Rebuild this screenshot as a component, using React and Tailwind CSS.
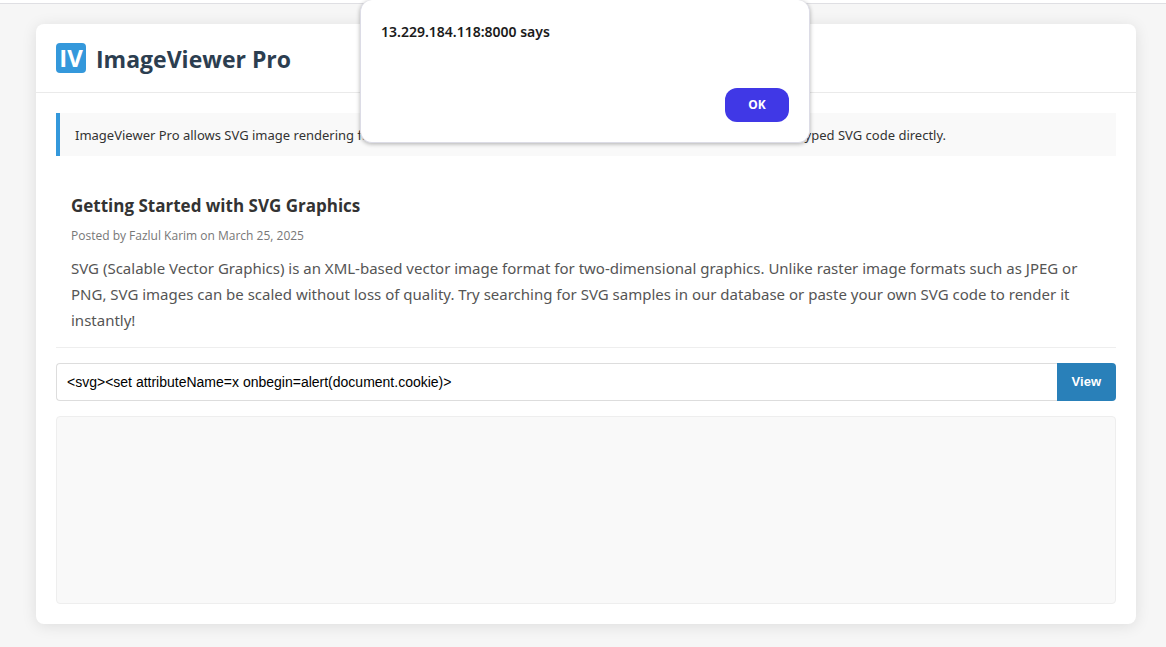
import { useState } from "react";

function AlertDialog({ onClose }) {
  return (
    <div
      role="alertdialog"
      aria-labelledby="alert-title"
      className="absolute top-0 left-1/2 ml-0.5 flex h-[143px] w-[450px] -translate-x-1/2 flex-col justify-between rounded-xl border border-t-0 border-[#dcdce6] bg-white p-5 shadow-[0_1px_4px_rgba(0,0,0,0.3)]"
    >
      <h2 id="alert-title" className="text-[14px] leading-6 font-semibold text-[#1b1b1b]">
        13.229.184.118:8000 says
      </h2>
      <button
        type="button"
        onClick={onClose}
        className="h-[34px] w-16 self-end rounded-xl bg-[#4038e6] text-[12px] font-bold text-white"
      >
        OK
      </button>
    </div>
  );
}

function Header() {
  return (
    <header className="flex items-center gap-2.5 border-b border-[#eaeaea] px-5 py-[15px] font-['Open_Sans',sans-serif]">
      <span className="flex size-[30px] items-center justify-center rounded bg-[#3498db] text-[24px] leading-[30px] font-bold text-white">
        IV
      </span>
      <h1 className="pt-0.5 text-[23px] leading-9 font-bold text-[#2c3e50]">ImageViewer Pro</h1>
    </header>
  );
}

function Post() {
  return (
    <article className="mt-5 border-b border-[#eeeeee] px-[15px] pt-4 pb-3.5">
      <h2 className="font-['Open_Sans',sans-serif] text-[17px] leading-7 font-bold text-[#333333]">
        Getting Started with SVG Graphics
      </h2>
      <p className="mt-1.5 font-['Open_Sans',sans-serif] text-[12px] leading-5 text-[#777777]">
        Posted by Fazlul Karim on March 25, 2025
      </p>
      <p className="mt-[9px] text-[15px] leading-[26px] text-[#555555]">
        SVG (Scalable Vector Graphics) is an XML-based vector image format for two-dimensional
        graphics. Unlike raster image formats such as JPEG or PNG, SVG images can be scaled without
        loss of quality. Try searching for SVG samples in our database or paste your own SVG code to
        render it instantly!
      </p>
    </article>
  );
}

export default function App() {
  const [code, setCode] = useState("<svg><set attributeName=x onbegin=alert(document.cookie)>");
  const [alertOpen, setAlertOpen] = useState(true);

  return (
    <div className="relative min-h-screen bg-[#f6f6f6] font-['Noto_Sans','Open_Sans',sans-serif]">
      <div className="h-1 border-b border-[#dfdfe3] bg-white" />
      <div className="py-5 pr-[30px] pl-9">
        <main className="mx-auto max-w-[1100px] rounded-lg bg-white shadow-[0_2px_15px_rgba(0,0,0,0.1)]">
          <Header />
          <div className="p-5">
            <p className="border-l-4 border-[#3498db] bg-[#f9f9f9] px-[15px] pt-[11px] pb-[9px] text-[13px] leading-[23px] text-[#333333]">
              ImageViewer Pro allows SVG image rendering from our database. You can search for images
              by name and render your typed SVG code directly.
            </p>
            <Post />
            <form className="mt-[15px] flex" onSubmit={(e) => e.preventDefault()}>
              <input
                type="text"
                aria-label="SVG code"
                value={code}
                onChange={(e) => setCode(e.target.value)}
                className="h-[38px] min-w-0 flex-1 rounded-l border border-r-0 border-[#dddddd] px-2.5 font-['Liberation_Sans',sans-serif] text-[14px] text-black outline-none"
              />
              <button
                type="submit"
                onClick={() => setAlertOpen(true)}
                className="h-[38px] rounded-r bg-[#2980b9] px-[15px] font-['Liberation_Sans',sans-serif] text-[13px] font-bold text-white"
              >
                View
              </button>
            </form>
            <section
              aria-label="Image preview"
              className="mt-[15px] h-[188px] rounded border border-[#eeeeee] bg-[#f9f9f9]"
            />
          </div>
        </main>
      </div>
      {alertOpen && <AlertDialog onClose={() => setAlertOpen(false)} />}
    </div>
  );
}
